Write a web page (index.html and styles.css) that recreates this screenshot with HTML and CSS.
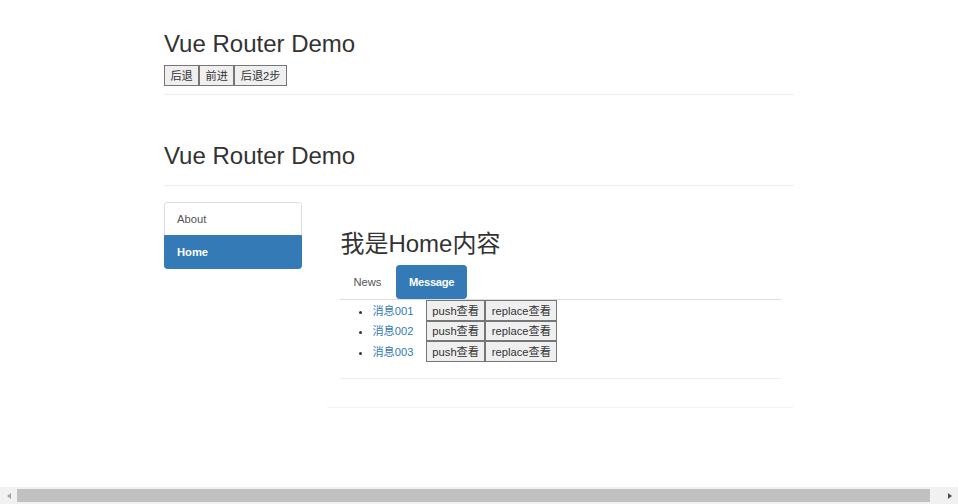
FILE: index.html
```html
<!DOCTYPE html>
<html lang="zh-CN">
<head>
<meta charset="utf-8">
<title>Vue Router Demo</title>
<link rel="stylesheet" href="styles.css">
</head>
<body>
<div class="page">
  <header class="page-header banner">
    <h2>Vue Router Demo</h2>
    <div class="history"><button class="btn">后退</button><button class="btn">前进</button><button class="btn">后退2步</button></div>
  </header>
  <header class="page-header second">
    <h2>Vue Router Demo</h2>
  </header>
  <div class="main">
    <nav class="list-group">
      <a class="list-group-item" href="#/about">About</a>
      <a class="list-group-item active" href="#/home">Home</a>
    </nav>
    <div class="panel">
      <div class="panel-body">
        <h2>我是Home内容</h2>
        <ul class="nav-tabs">
          <li><a class="tab" href="#/home/news">News</a></li>
          <li><a class="tab active" href="#/home/message">Message</a></li>
        </ul>
        <div class="messages">
          <ul class="msg-list">
            <li><a class="msg-link" href="#/home/message/detail/1">消息001</a><button class="btn">push查看</button><button class="btn">replace查看</button></li>
            <li><a class="msg-link" href="#/home/message/detail/2">消息002</a><button class="btn">push查看</button><button class="btn">replace查看</button></li>
            <li><a class="msg-link" href="#/home/message/detail/3">消息003</a><button class="btn">push查看</button><button class="btn">replace查看</button></li>
          </ul>
          <hr class="rule">
        </div>
      </div>
    </div>
  </div>
</div>
<div class="hscroll">
  <span class="arrow"><span class="tri-left"></span></span>
  <span class="thumb"></span>
  <span class="arrow"><span class="tri-right"></span></span>
</div>
</body>
</html>
```
FILE: styles.css
```css
html, body {
  margin: 0;
  padding: 0;
}

body {
  font-family: "Liberation Sans", Arial, "Noto Sans CJK SC", sans-serif;
  font-size: 11.2px;
  line-height: 16px;
  color: #333;
  background: #fff;
  overflow: hidden;
  height: 504px;
}

.page {
  margin-left: 164px;
  width: 629.5px;
}

.page-header {
  margin: 31px 0 16px;
  padding-bottom: 7.6px;
  border-bottom: 1px solid #eee;
}

.page-header.second {
  margin-top: 48px;
}

h2 {
  font-size: 24px;
  line-height: 26.4px;
  font-weight: normal;
  margin: 0 0 8px;
}

.history {
  display: flex;
}

.btn {
  font: inherit;
  line-height: 16px;
  color: #333;
  background: #efefef;
  border: 1px solid #767676;
  border-radius: 0;
  padding: 1.5px 5.4px;
  margin: 0;
}

.msg-list .btn {
  padding-top: 1.25px;
  padding-bottom: 1.25px;
}

.main {
  display: flex;
  align-items: flex-start;
  gap: 25px;
}

.list-group {
  width: 139px;
  margin: 0 0 16px;
  display: flex;
  flex-direction: column;
}

.list-group-item {
  display: block;
  padding: 8px 12px;
  border: 1px solid #ddd;
  margin-bottom: -1px;
  color: #555;
  background: #fff;
  text-decoration: none;
}

.list-group-item:first-child {
  border-radius: 3.2px 3.2px 0 0;
}

.list-group-item:last-child {
  border-radius: 0 0 3.2px 3.2px;
  margin-bottom: 0;
}

.list-group-item.active,
.tab.active {
  background: #337ab7;
  border-color: #337ab7;
  color: #fff;
  font-weight: bold;
}

.tab.active {
  letter-spacing: -0.28px;
}

.panel {
  width: 466px;
  margin-bottom: 16px;
  background: #fff;
  border: 1px solid transparent;
  border-radius: 3.2px;
  box-shadow: 0 1px 1px rgba(0, 0, 0, 0.05);
}

.panel-body {
  padding: 12px;
}

.panel-body h2 {
  margin-top: 16px;
}

.nav-tabs {
  list-style: none;
  margin: 0;
  padding: 0;
  display: flex;
  border-bottom: 1px solid #ddd;
}

.tab {
  display: block;
  padding: 8px 12px;
  margin-right: 1.6px;
  border: 1px solid transparent;
  border-radius: 3.2px;
  color: #555;
  text-decoration: none;
}

.msg-list {
  margin: 0 0 8px;
  padding-left: 32px;
}

.msg-link {
  color: #337ab7;
  text-decoration: none;
  margin-right: 12.5px;
}

.rule {
  margin: 16px 0 15.5px;
  height: 0;
  border: 0;
  border-top: 1px solid #eee;
}

.hscroll {
  position: fixed;
  left: 0;
  right: 0;
  bottom: 0;
  height: 17px;
  background: #f1f1f1;
  display: flex;
  align-items: center;
}

.arrow {
  width: 17px;
  height: 17px;
  display: flex;
  align-items: center;
  justify-content: center;
  flex: none;
}

.tri-left {
  width: 0;
  height: 0;
  border-top: 3.5px solid transparent;
  border-bottom: 3.5px solid transparent;
  border-right: 4px solid #a3a3a3;
}

.tri-right {
  width: 0;
  height: 0;
  border-top: 3.5px solid transparent;
  border-bottom: 3.5px solid transparent;
  border-left: 4px solid #505050;
}

.thumb {
  flex: 1;
  height: 13px;
  margin-right: 11px;
  background: #c1c1c1;
}
```
